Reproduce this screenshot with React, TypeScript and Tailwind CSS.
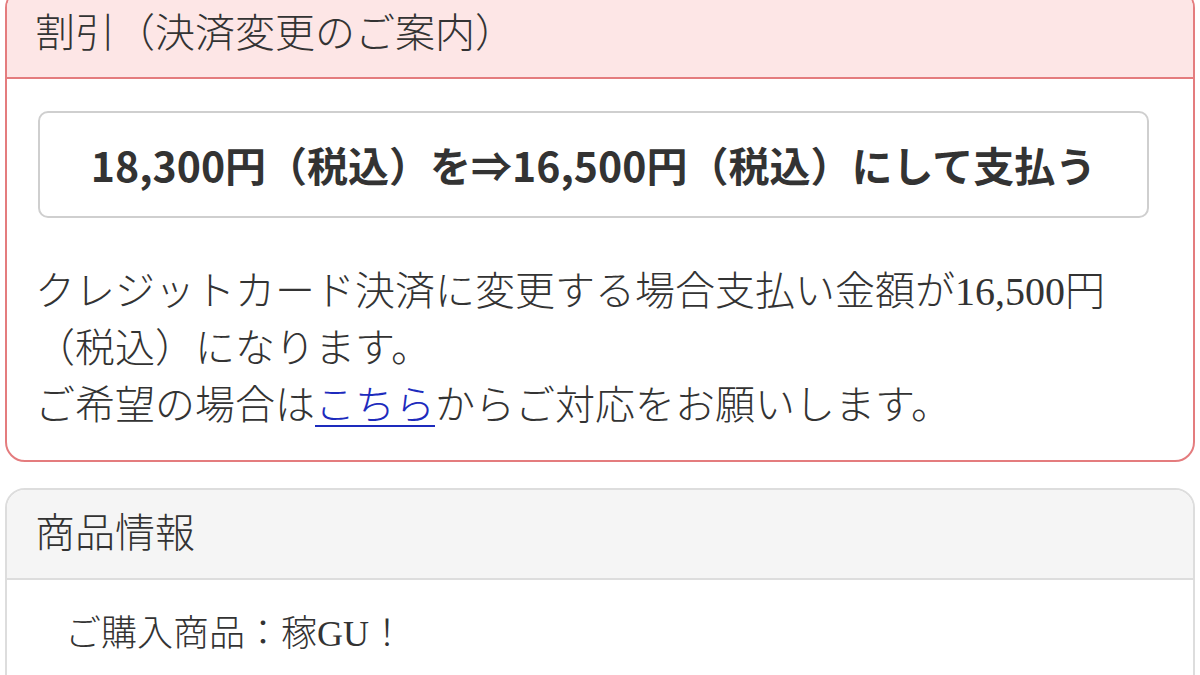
import React from "react";

const serif = "font-['Liberation_Serif','Noto_Sans_CJK_JP',serif]";

export default function App() {
  return (
    <div className="w-[1200px] h-[675px] overflow-hidden bg-white text-[#333]">
      <div className="px-[5px] -mt-[12px]">
        <div className="border-2 border-[#e47c7e] rounded-[20px] overflow-hidden">
          <div className={`h-[89px] bg-[#fde6e6] border-b-2 border-[#e47c7e] flex items-center pl-[28px] text-[40px] font-light ${serif}`}>
            割引（決済変更のご案内）
          </div>
          <div className="pt-[32px] pb-[26px]">
            <div className="ml-[31px] mr-[44px] h-[107px] border-2 border-[#cfcfcf] rounded-[10px] flex items-center justify-center font-semibold text-[41px] text-[#333] font-['Noto_Sans_CJK_JP','Noto_Sans',sans-serif]">
              18,300円（税込）を⇒16,500円（税込）にして支払う
            </div>
            <div className={`mt-[45px] pl-[28px] pr-[10px] text-[40px] leading-[57px] font-light ${serif}`}>
              <div>クレジットカード決済に変更する場合支払い金額が16,500円</div>
              <div>（税込）になります。</div>
              <div>
                ご希望の場合は
                <a href="#" className="text-[#1d2bbd] underline decoration-2 underline-offset-[6px]">こちら</a>
                からご対応をお願いします。
              </div>
            </div>
          </div>
        </div>

        <div className="mt-[26px] border-2 border-[#dddddd] rounded-[20px] overflow-hidden">
          <div className={`h-[90px] bg-[#f5f5f5] border-b-2 border-[#dddddd] flex items-center pl-[28px] text-[40px] font-light ${serif}`}>
            商品情報
          </div>
          <div className={`pt-[26px] pl-[58px] pb-[40px] text-[36px] leading-[57px] font-light ${serif}`}>
            ご購入商品：稼GU！
          </div>
        </div>
      </div>
    </div>
  );
}
